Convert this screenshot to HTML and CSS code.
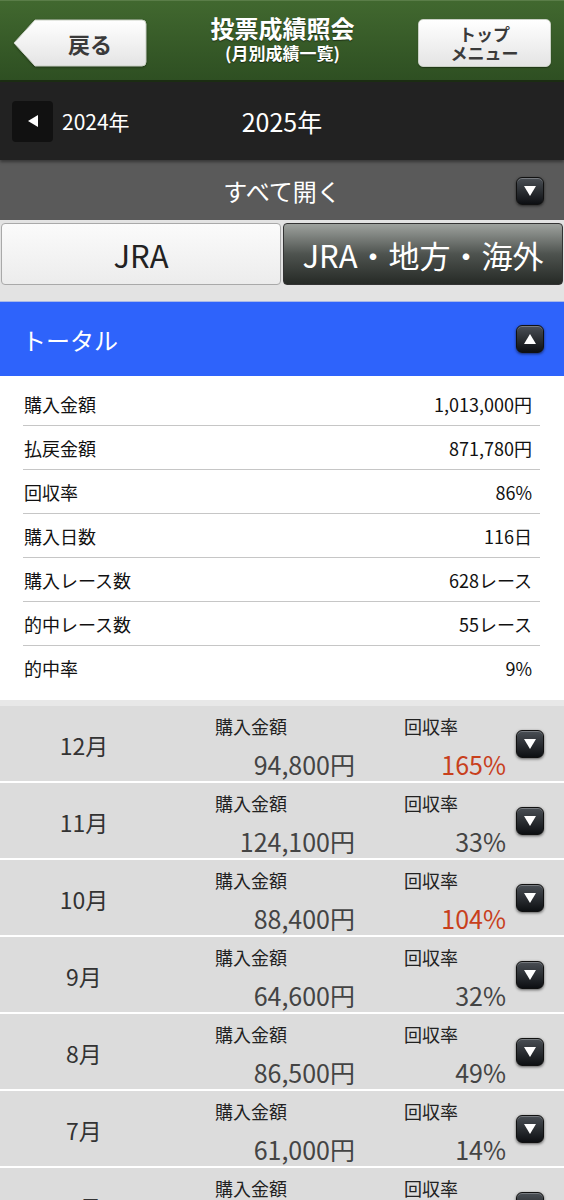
FILE: index.html
```html
<!DOCTYPE html>
<html lang="ja">
<head>
<meta charset="utf-8">
<title>投票成績照会</title>
<link rel="stylesheet" href="styles.css">
</head>
<body>
<header class="hdr">
  <div class="back-wrap">
    <svg class="back-svg" viewBox="0 0 134 48" width="134" height="48">
      <defs>
        <linearGradient id="bg1" x1="0" y1="0" x2="0" y2="1">
          <stop offset="0" stop-color="#ffffff"/>
          <stop offset="1" stop-color="#e4e4e4"/>
        </linearGradient>
      </defs>
      <path d="M1 24 L22 1 H129 Q133 1 133 5 V43 Q133 47 129 47 H22 Z" fill="url(#bg1)" stroke="#c9d0c4" stroke-width="1"/>
    </svg>
    <span class="back-txt">戻る</span>
  </div>
  <div class="title">
    <div class="t1">投票成績照会</div>
    <div class="t2">(月別成績一覧)</div>
  </div>
  <div class="topbtn"><span>トップ</span><span>メニュー</span></div>
</header>

<div class="yearbar">
  <div class="prev"><span class="tri-left"></span></div>
  <span class="prev-year">2024年</span>
  <span class="cur-year">2025年</span>
</div>

<div class="openall">
  <span class="openall-txt">すべて開く</span>
  <span class="tog"><span class="tri-down"></span></span>
</div>

<div class="tabs">
  <div class="tab tab-light">JRA</div>
  <div class="tab tab-dark">JRA・地方・海外</div>
</div>

<div class="total">
  <span>トータル</span>
  <span class="tog"><span class="tri-up"></span></span>
</div>

<div class="summary">
  <div class="srow"><span>購入金額</span><span>1,013,000円</span></div>
  <div class="srow"><span>払戻金額</span><span>871,780円</span></div>
  <div class="srow"><span>回収率</span><span>86%</span></div>
  <div class="srow"><span>購入日数</span><span>116日</span></div>
  <div class="srow"><span>購入レース数</span><span>628レース</span></div>
  <div class="srow"><span>的中レース数</span><span>55レース</span></div>
  <div class="srow"><span>的中率</span><span>9%</span></div>
</div>

<div class="months">
  <div class="mrow">
    <div class="mname">12月</div>
    <div class="col col-amt"><div class="lbl">購入金額</div><div class="val">94,800円</div></div>
    <div class="col col-rate"><div class="lbl">回収率</div><div class="val red">165%</div></div>
    <span class="tog"><span class="tri-down"></span></span>
  </div>
  <div class="mrow">
    <div class="mname">11月</div>
    <div class="col col-amt"><div class="lbl">購入金額</div><div class="val">124,100円</div></div>
    <div class="col col-rate"><div class="lbl">回収率</div><div class="val">33%</div></div>
    <span class="tog"><span class="tri-down"></span></span>
  </div>
  <div class="mrow">
    <div class="mname">10月</div>
    <div class="col col-amt"><div class="lbl">購入金額</div><div class="val">88,400円</div></div>
    <div class="col col-rate"><div class="lbl">回収率</div><div class="val red">104%</div></div>
    <span class="tog"><span class="tri-down"></span></span>
  </div>
  <div class="mrow">
    <div class="mname">9月</div>
    <div class="col col-amt"><div class="lbl">購入金額</div><div class="val">64,600円</div></div>
    <div class="col col-rate"><div class="lbl">回収率</div><div class="val">32%</div></div>
    <span class="tog"><span class="tri-down"></span></span>
  </div>
  <div class="mrow">
    <div class="mname">8月</div>
    <div class="col col-amt"><div class="lbl">購入金額</div><div class="val">86,500円</div></div>
    <div class="col col-rate"><div class="lbl">回収率</div><div class="val">49%</div></div>
    <span class="tog"><span class="tri-down"></span></span>
  </div>
  <div class="mrow">
    <div class="mname">7月</div>
    <div class="col col-amt"><div class="lbl">購入金額</div><div class="val">61,000円</div></div>
    <div class="col col-rate"><div class="lbl">回収率</div><div class="val">14%</div></div>
    <span class="tog"><span class="tri-down"></span></span>
  </div>
  <div class="mrow">
    <div class="mname">7月</div>
    <div class="col col-amt"><div class="lbl">購入金額</div><div class="val">50,300円</div></div>
    <div class="col col-rate"><div class="lbl">回収率</div><div class="val">45%</div></div>
    <span class="tog"><span class="tri-down"></span></span>
  </div>
</div>
</body>
</html>
```

FILE: styles.css
```css
* { box-sizing: border-box; }
html, body { margin: 0; padding: 0; }
body {
  width: 564px;
  font-family: "Noto Sans CJK JP", "Noto Sans", sans-serif;
  background: #ffffff;
  color: #222;
  overflow: hidden;
}

/* header */
.hdr {
  height: 82px;
  background: linear-gradient(#41682f, #2e4f22);
  border-top: 1px solid #5a7d48;
  border-bottom: 2px solid #1c2d13;
  display: flex;
  align-items: flex-start;
  justify-content: space-between;
  padding: 18px 13px 0 13px;
}
.back-wrap {
  position: relative;
  width: 134px;
  height: 48px;
}
.back-svg { display: block; filter: drop-shadow(0 1px 1px rgba(0,0,0,0.35)); }
.back-txt {
  position: absolute;
  left: 20px;
  right: 0;
  top: 0;
  height: 48px;
  display: flex;
  align-items: center;
  justify-content: center;
  font-size: 22px;
  font-weight: 700;
  color: #3a3a3a;
}
.title {
  text-align: center;
  color: #fff;
  margin-top: -6px;
  text-shadow: 0 1px 1px rgba(0,0,0,0.5);
}
.t1 { font-size: 24px; font-weight: 700; line-height: 30px; }
.t2 { font-size: 17px; font-weight: 700; line-height: 20px; }
.topbtn {
  width: 133px;
  height: 48px;
  border-radius: 5px;
  background: linear-gradient(#ffffff, #e4e4e4);
  border: 1px solid #c9d0c4;
  box-shadow: 0 1px 1px rgba(0,0,0,0.35);
  display: flex;
  flex-direction: column;
  align-items: center;
  justify-content: center;
  font-size: 17px;
  font-weight: 700;
  line-height: 19px;
  color: #3a3a3a;
}

/* year bar */
.yearbar {
  height: 78px;
  background: #222222;
  display: flex;
  align-items: center;
  padding-left: 12px;
  position: relative;
  box-shadow: 0 2px 3px rgba(0,0,0,0.4);
  z-index: 1;
}
.prev {
  width: 41px;
  height: 41px;
  background: #111;
  border-radius: 4px;
  display: flex;
  align-items: center;
  justify-content: center;
}
.tri-left {
  width: 0; height: 0;
  border-top: 6px solid transparent;
  border-bottom: 6px solid transparent;
  border-right: 10px solid #fff;
}
.prev-year {
  color: #fff;
  font-size: 21px;
  margin-left: 9px;
}
.cur-year {
  color: #fff;
  font-size: 25px;
  margin-left: 112px;
}

/* open all */
.openall {
  height: 60px;
  background: #5a5a5a;
  display: flex;
  align-items: center;
  justify-content: center;
  position: relative;
}
.openall-txt {
  color: #fff;
  font-size: 24px;
  font-weight: 400;
}
.openall .tog {
  position: absolute;
  right: 20px;
  top: 17px;
}

/* toggle icon */
.tog {
  width: 28px;
  height: 28px;
  border-radius: 6px;
  background: linear-gradient(#4a4f55, #0d0f12);
  border: 1px solid #111;
  box-shadow: 0 1px 3px rgba(0,0,0,0.6), inset 0 1px 0 rgba(255,255,255,0.25);
  display: flex;
  align-items: center;
  justify-content: center;
  flex-shrink: 0;
}
.tri-down {
  width: 0; height: 0;
  border-left: 6px solid transparent;
  border-right: 6px solid transparent;
  border-top: 10px solid #fff;
}
.tri-up {
  width: 0; height: 0;
  border-left: 6px solid transparent;
  border-right: 6px solid transparent;
  border-bottom: 10px solid #fff;
}

/* tabs */
.tabs {
  height: 82px;
  background: #e3e3e3;
  display: flex;
  gap: 2px;
  padding: 3px 1px 0 1px;
  border-bottom: 1px solid #a8b8e8;
}
.tab {
  flex: 1;
  height: 62px;
  border-radius: 4px;
  display: flex;
  align-items: center;
  justify-content: center;
}
.tab-light {
  background: linear-gradient(#fbfbfb, #ececec);
  border: 1px solid #a9a9a9;
  font-size: 31px;
  color: #222;
  font-weight: 400;
}
.tab-dark {
  background: linear-gradient(#9ea29e, #4e534f 50%, #262a26);
  border: 1px solid #333;
  font-size: 31px;
  color: #fff;
  font-weight: 400;
  white-space: nowrap;
}

/* total */
.total {
  height: 74px;
  background: #2e63fb;
  color: #fff;
  font-size: 24px;
  font-weight: 400;
  display: flex;
  align-items: center;
  justify-content: space-between;
  padding: 0 20px 0 22px;
}

/* summary */
.summary {
  padding: 6px 24px 10px 23px;
  background: #fff;
}
.srow {
  height: 44px;
  display: flex;
  align-items: center;
  justify-content: space-between;
  border-bottom: 1px solid #c6c6c6;
  font-size: 18px;
  font-weight: 400;
  color: #111;
  padding: 0 8px 0 1px;
}
.srow:last-child { border-bottom: none; }

/* months */
.months {
  border-top: 6px solid #e8e8e8;
}
.mrow {
  height: 77px;
  background: #dcdcdc;
  border-bottom: 2px solid #fff;
  display: flex;
  align-items: center;
}
.mname {
  width: 168px;
  text-align: center;
  font-size: 23px;
  color: #333;
  font-weight: 400;
  padding-top: 2px;
}
.col { align-self: stretch; padding-top: 8px; }
.col-amt { width: 187px; }
.col-rate { width: 151px; }
.lbl {
  font-size: 18px;
  font-weight: 400;
  color: #222;
  line-height: 24px;
}
.col-amt .lbl { padding-left: 47px; }
.col-rate .lbl { padding-left: 49px; }
.val {
  text-align: right;
  font-size: 25px;
  font-weight: 400;
  color: #444;
  line-height: 34px;
  margin-top: 9px;
}
.val.red { color: #c8401c; }
.mrow .tog { margin-left: 10px; }
```
